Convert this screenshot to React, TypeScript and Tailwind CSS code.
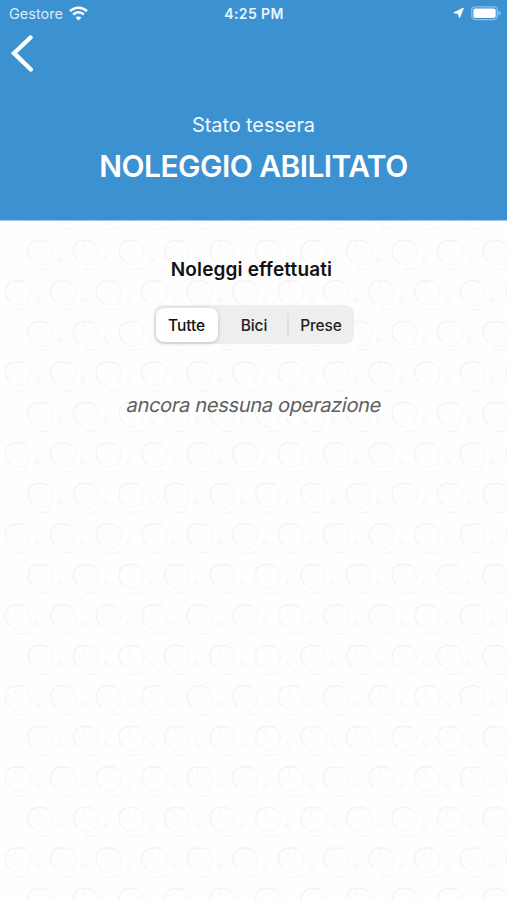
import { useState } from 'react';

const filters = ['Tutte', 'Bici', 'Prese'];

function PatternMark({ x, y }: { x: number; y: number }) {
  return (
    <g transform={`translate(${x} ${y})`} fill="none" strokeLinecap="round">
      <path d="M-8 9C-15 3-14-8-6-11C-2-12 3-12 7-10" stroke="#f3f3f3" strokeWidth="1.4" />
      <path d="M7-10C13-5 14 4 8 10M-2-10L-3-4" stroke="#f8f8f8" strokeWidth="1.3" />
      <path d="M8 10C3 14-3 13-8 9" stroke="#fafafa" strokeWidth="1.3" />
      <path d="M18 8L19 4M21 9L22 7" stroke="#f7f7f7" strokeWidth="2" />
      <path d="M-1 17C4 18 8 17 10 16" stroke="#f6f6f6" strokeWidth="1.3" />
    </g>
  );
}

function BackgroundPattern() {
  return (
    <svg className="pointer-events-none absolute inset-y-0 left-[5px] h-full w-[502px]" aria-hidden="true">
      <defs>
        <pattern id="marks" width="45.5" height="81" patternUnits="userSpaceOnUse" patternTransform="translate(13 11)">
          <PatternMark x={22.75} y={20} />
          <PatternMark x={0} y={60.5} />
          <PatternMark x={45.5} y={60.5} />
        </pattern>
      </defs>
      <rect x="15" width="487" height="100%" fill="url(#marks)" />
      {/* the shifted rows start one mark closer to the edge */}
      {Array.from({ length: 8 }, (_, i) => (
        <rect key={i} y={52 + i * 81} width="15" height="40.5" fill="url(#marks)" />
      ))}
    </svg>
  );
}

function StatusBar() {
  return (
    <div className="grid h-7 grid-cols-3 items-center pl-[9px] pr-[6px] text-white">
      <div className="flex items-center gap-[6px]">
        <span className="text-[14.5px] leading-none text-[#d9ecfa]">Gestore</span>
        <svg className="-mt-[2px]" width="19" height="15" viewBox="0 0 19 15" fill="none" stroke="white" strokeWidth="2.5">
          <path d="M1 5.2C5.8.5 13.2.5 18 5.2" />
          <path d="M4.2 8.5C7.2 5.6 11.8 5.6 14.8 8.5" />
          <path d="M9.5 14.5L6.6 11.6C8.2 10.1 10.8 10.1 12.4 11.6Z" fill="white" stroke="none" />
        </svg>
      </div>
      <span className="-ml-[2px] text-center text-[14px] font-semibold leading-none tracking-[0.4px] text-[#eaf6ff]">4:25 PM</span>
      <div className="-mt-[2px] flex items-center justify-end gap-[7px]">
        <svg width="11" height="12" viewBox="0 0 11 12" fill="white" stroke="white" strokeWidth=".8" strokeLinejoin="round">
          <path d="M10.5 1L6.5 10.8L5.3 6.7L.8 5.7Z" />
        </svg>
        <svg width="30" height="15" viewBox="0 0 30 15">
          <rect x=".8" y=".8" width="25.5" height="12.8" rx="3.5" fill="none" stroke="#8dc0e6" strokeWidth="1.3" />
          <rect x="2.4" y="2.5" width="22.3" height="9.4" rx="2" fill="white" />
          <path d="M27.4 4.8Q29.7 5.5 29.7 7.2T27.4 9.6Z" fill="#8dc0e6" />
        </svg>
      </div>
    </div>
  );
}

export default function App() {
  const [selected, setSelected] = useState('Tutte');

  return (
    <div className="flex h-[900px] w-full flex-col overflow-hidden bg-[#fefefe] font-[Inter,sans-serif]">
      {/* Header */}
      <header className="h-[221px] shrink-0 border-b border-[#9bc9e9] bg-[#3c91d1] text-white">
        <StatusBar />
        <button className="ml-[10px] mt-[6px] block" aria-label="Indietro">
          <svg width="24" height="38" viewBox="0 0 24 38" fill="none" stroke="white" strokeWidth="4.4" strokeLinecap="round" strokeLinejoin="miter">
            <path d="M20.5 3.5L4 19.2L20.8 35.5" />
          </svg>
        </button>
        <div className="mt-[38px] text-center">
          <p className="text-[20px] leading-[30px] tracking-[-0.1px] text-[#eef8ff]">Stato tessera</p>
          <h1 className="mt-[6px] text-[30px] font-semibold leading-[40px] tracking-[-0.55px]">NOLEGGIO ABILITATO</h1>
        </div>
      </header>

      {/* Rentals */}
      <main className="relative flex-1">
        <BackgroundPattern />
        <div className="relative flex flex-col items-center pt-[35px]">
          <h2 className="pr-[4px] text-[19px] font-semibold leading-[28px] tracking-[0.15px] text-[#111]">Noleggi effettuati</h2>
          <div className="mt-[21px] grid h-[39px] w-[200px] grid-cols-[62px_69px_65px] items-center rounded-[9px] bg-[#eeeeef] py-[2px] pl-[2px]">
            {filters.map((filter, i) => (
              <div key={filter} className="flex h-full items-center">
                {i > 0 && (
                  <span
                    className={
                      filter === selected || filters[i - 1] === selected
                        ? 'h-[22px] w-[2px]'
                        : 'h-[22px] w-[2px] bg-[#e0e0e1]'
                    }
                  />
                )}
                <button
                  onClick={() => setSelected(filter)}
                  className={
                    filter === selected
                      ? 'h-[34px] flex-1 rounded-[8px] bg-white pt-[2px] text-[15.5px] font-medium tracking-[-0.1px] text-[#111] shadow-[0_1px_4px_rgba(0,0,0,0.2)]'
                      : 'h-[34px] flex-1 pl-[2px] pt-[2px] text-[15.5px] font-medium tracking-[-0.1px] text-[#222]'
                  }
                >
                  {filter}
                </button>
              </div>
            ))}
          </div>
          <p className="mt-[46px] -skew-x-12 pl-[2px] text-[20px] leading-[30px] tracking-[-0.3px] text-[#606060]">
            ancora nessuna operazione
          </p>
        </div>
      </main>
    </div>
  );
}
